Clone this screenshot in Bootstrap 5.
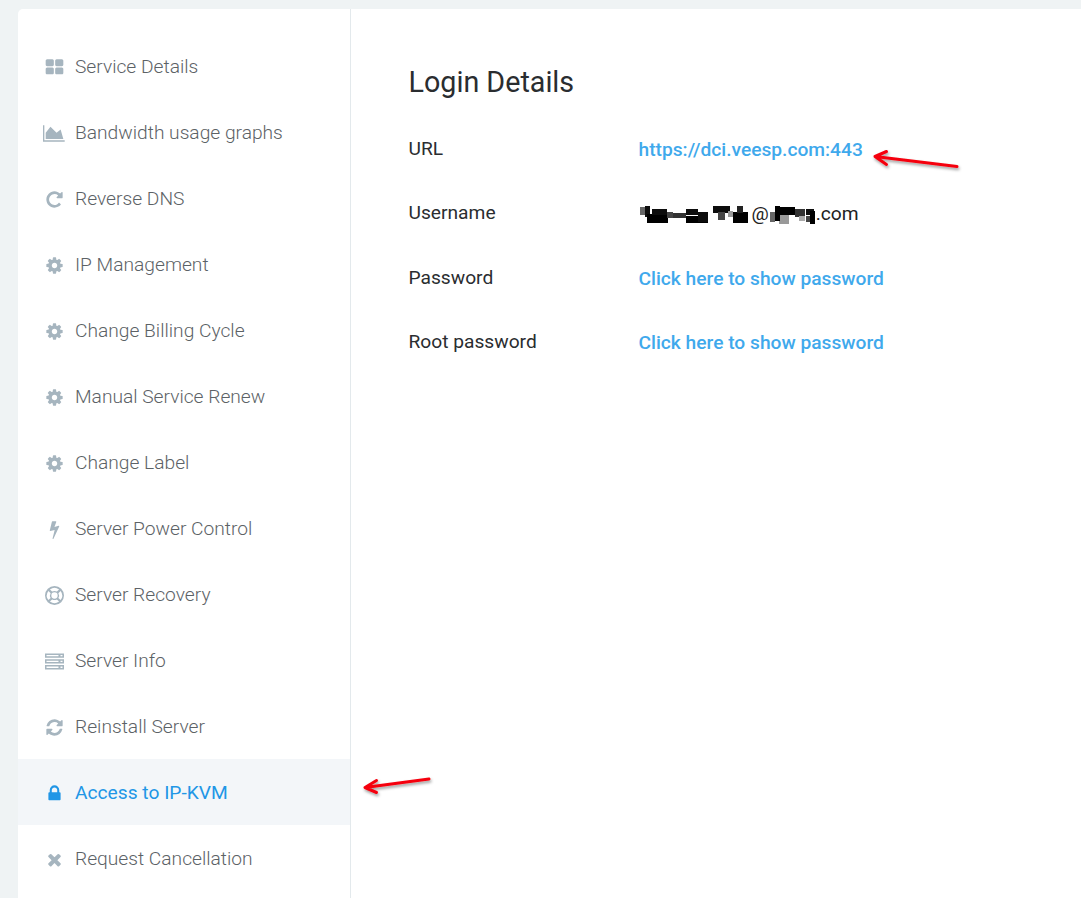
<!doctype html>
<html lang="en">
<head>
<meta charset="utf-8">
<title>Login Details</title>
<link href="https://cdn.jsdelivr.net/npm/bootstrap@5.3.0/dist/css/bootstrap.min.css" rel="stylesheet">
<style>
html, body { height: 100%; }
body { background: #eff3f4; padding: 9px 0 0 18px; overflow: hidden; font-family: Roboto, "Liberation Sans", sans-serif; }
.panel-shell { background: #fff; height: 889px; border-top-left-radius: 5px; position: relative; overflow: hidden; }
.side-menu { width: 333px; padding-top: 24px; border-right: 1px solid #e3e9ec; flex: none; }
.side-link { display: flex; align-items: center; height: 66px; padding: 2px 0 0 25px; color: #5c6266; font-size: 19.2px; font-weight: 300; text-decoration: none; }
.side-link.current { background: #f3f6f9; color: #2196e6; font-weight: 400; }
.side-ico { width: 22px; height: 22px; flex: none; margin-right: 10px; display: flex; align-items: center; justify-content: center; color: #a6b5bf; }
.current .side-ico { color: #2196e6; }
.side-ico svg { height: 19px; width: auto; fill: currentColor; display: block; overflow: visible; }
.detail-pane { padding: 54px 0 0 57.5px; }
.detail-title { font-size: 28.7px; font-weight: 400; color: #2a2d30; line-height: 38px; margin: 0 0 36px; }
.detail-row { display: flex; height: 64.33px; font-size: 19.2px; line-height: 24px; color: #2a2d30; }
.detail-key { width: 230px; flex: none; }
.detail-val { font-weight: 500; position: relative; top: 1px; display: flex; align-items: center; height: 24px; }
.detail-val.plain-val { font-weight: 400; color: #222; }
.detail-val a { color: #3fa9ec; text-decoration: none; }
.smudge { display: block; height: 22px; width: auto; flex: none; overflow: visible; }
.note-arrows { position: absolute; left: -18px; top: -9px; width: 1081px; height: 898px; pointer-events: none; }
.note-arrows g { fill: none; stroke: #f5000f; stroke-width: 3; stroke-linecap: round; stroke-linejoin: round; }
</style>
</head>
<body>
<svg width="0" height="0" class="position-absolute" aria-hidden="true">
  <defs>
    <filter id="soft" x="-10%" y="-30%" width="120%" height="160%"><feGaussianBlur stdDeviation=".6"/></filter>
    <filter id="drop" x="-20%" y="-100%" width="140%" height="300%"><feDropShadow dx="1" dy="2" stdDeviation="1.6" flood-color="#000" flood-opacity=".4"/></filter>
  </defs>
</svg>

<div class="panel-shell d-flex">
  <nav class="side-menu d-flex flex-column">
    <a class="side-link" href="#"><span class="side-ico"><svg viewBox="0 0 1792 1792"><path d="M832 1024v384q0 52-38 90t-90 38h-512q-52 0-90-38t-38-90v-384q0-52 38-90t90-38h512q52 0 90 38t38 90zm0-768v384q0 52-38 90t-90 38h-512q-52 0-90-38t-38-90v-384q0-52 38-90t90-38h512q52 0 90 38t38 90zm896 768v384q0 52-38 90t-90 38h-512q-52 0-90-38t-38-90v-384q0-52 38-90t90-38h512q52 0 90 38t38 90zm0-768v384q0 52-38 90t-90 38h-512q-52 0-90-38t-38-90v-384q0-52 38-90t90-38h512q52 0 90 38t38 90z"/></svg></span>Service Details</a>
    <a class="side-link" href="#"><span class="side-ico"><svg viewBox="0 0 2048 1792"><path d="M2048 1536v128H0V128h128v1408zM1664 512l256 896H256V832l448-576 576 576z"/></svg></span>Bandwidth usage graphs</a>
    <a class="side-link" href="#"><span class="side-ico"><svg viewBox="0 0 1792 1792"><path d="M1664 256v448q0 26-19 45t-45 19h-448q-42 0-59-40-17-39 14-69l138-138q-148-137-349-137-104 0-198.500 40.500t-163.500 109.500-109.500 163.500-40.500 198.500 40.500 198.500 109.500 163.500 163.500 109.500 198.500 40.500q119 0 225-52t179-147q7-10 23-12 15 0 25 9l137 138q9 8 9.500 20.500t-7.500 22.500q-109 132-264 204.500t-327 72.500q-156 0-298-61t-245-164-164-245-61-298 61-298 164-245 245-164 298-61q147 0 284.500 55.500t244.500 156.500l130-129q29-31 70-14 39 17 39 59z"/></svg></span>Reverse DNS</a>
    <a class="side-link" href="#"><span class="side-ico"><svg viewBox="0 0 1792 1792"><path d="M1152 896q0-106-75-181t-181-75-181 75-75 181 75 181 181 75 181-75 75-181zm512-109v222q0 12-8 23t-20 13l-185 28q-19 54-39 91 35 50 107 138 10 12 10 25t-9 23q-27 37-99 108t-94 71q-12 0-26-9l-138-108q-44 23-91 38-16 136-29 186-7 28-36 28h-222q-14 0-24.500-8.500t-11.500-21.500l-28-184q-49-16-90-37l-141 107q-10 9-25 9-14 0-25-11-126-114-165-168-7-10-7-23 0-12 8-23 15-21 51-66.500t54-70.500q-27-50-41-99l-183-27q-13-2-21-12.500t-8-23.500v-222q0-12 8-23t19-13l186-28q14-46 39-92-40-57-107-138-10-12-10-24 0-10 9-23 26-36 98.500-107.500t94.500-71.500q13 0 26 10l138 107q44-23 91-38 16-136 29-186 7-28 36-28h222q14 0 24.500 8.500t11.500 21.500l28 184q49 16 90 37l142-107q9-9 24-9 13 0 25 10 129 119 165 170 7 8 7 22 0 12-8 23-15 21-51 66.500t-54 70.500q26 50 41 98l183 28q13 2 21 12.500t8 23.500z"/></svg></span>IP Management</a>
    <a class="side-link" href="#"><span class="side-ico"><svg viewBox="0 0 1792 1792"><path d="M1152 896q0-106-75-181t-181-75-181 75-75 181 75 181 181 75 181-75 75-181zm512-109v222q0 12-8 23t-20 13l-185 28q-19 54-39 91 35 50 107 138 10 12 10 25t-9 23q-27 37-99 108t-94 71q-12 0-26-9l-138-108q-44 23-91 38-16 136-29 186-7 28-36 28h-222q-14 0-24.500-8.500t-11.500-21.500l-28-184q-49-16-90-37l-141 107q-10 9-25 9-14 0-25-11-126-114-165-168-7-10-7-23 0-12 8-23 15-21 51-66.500t54-70.500q-27-50-41-99l-183-27q-13-2-21-12.500t-8-23.500v-222q0-12 8-23t19-13l186-28q14-46 39-92-40-57-107-138-10-12-10-24 0-10 9-23 26-36 98.500-107.500t94.500-71.500q13 0 26 10l138 107q44-23 91-38 16-136 29-186 7-28 36-28h222q14 0 24.500 8.500t11.500 21.500l28 184q49 16 90 37l142-107q9-9 24-9 13 0 25 10 129 119 165 170 7 8 7 22 0 12-8 23-15 21-51 66.500t-54 70.500q26 50 41 98l183 28q13 2 21 12.500t8 23.500z"/></svg></span>Change Billing Cycle</a>
    <a class="side-link" href="#"><span class="side-ico"><svg viewBox="0 0 1792 1792"><path d="M1152 896q0-106-75-181t-181-75-181 75-75 181 75 181 181 75 181-75 75-181zm512-109v222q0 12-8 23t-20 13l-185 28q-19 54-39 91 35 50 107 138 10 12 10 25t-9 23q-27 37-99 108t-94 71q-12 0-26-9l-138-108q-44 23-91 38-16 136-29 186-7 28-36 28h-222q-14 0-24.500-8.500t-11.500-21.500l-28-184q-49-16-90-37l-141 107q-10 9-25 9-14 0-25-11-126-114-165-168-7-10-7-23 0-12 8-23 15-21 51-66.500t54-70.500q-27-50-41-99l-183-27q-13-2-21-12.500t-8-23.500v-222q0-12 8-23t19-13l186-28q14-46 39-92-40-57-107-138-10-12-10-24 0-10 9-23 26-36 98.500-107.500t94.500-71.500q13 0 26 10l138 107q44-23 91-38 16-136 29-186 7-28 36-28h222q14 0 24.500 8.500t11.500 21.500l28 184q49 16 90 37l142-107q9-9 24-9 13 0 25 10 129 119 165 170 7 8 7 22 0 12-8 23-15 21-51 66.500t-54 70.500q26 50 41 98l183 28q13 2 21 12.500t8 23.500z"/></svg></span>Manual Service Renew</a>
    <a class="side-link" href="#"><span class="side-ico"><svg viewBox="0 0 1792 1792"><path d="M1152 896q0-106-75-181t-181-75-181 75-75 181 75 181 181 75 181-75 75-181zm512-109v222q0 12-8 23t-20 13l-185 28q-19 54-39 91 35 50 107 138 10 12 10 25t-9 23q-27 37-99 108t-94 71q-12 0-26-9l-138-108q-44 23-91 38-16 136-29 186-7 28-36 28h-222q-14 0-24.500-8.500t-11.500-21.500l-28-184q-49-16-90-37l-141 107q-10 9-25 9-14 0-25-11-126-114-165-168-7-10-7-23 0-12 8-23 15-21 51-66.500t54-70.500q-27-50-41-99l-183-27q-13-2-21-12.500t-8-23.500v-222q0-12 8-23t19-13l186-28q14-46 39-92-40-57-107-138-10-12-10-24 0-10 9-23 26-36 98.500-107.500t94.500-71.500q13 0 26 10l138 107q44-23 91-38 16-136 29-186 7-28 36-28h222q14 0 24.500 8.500t11.500 21.500l28 184q49 16 90 37l142-107q9-9 24-9 13 0 25 10 129 119 165 170 7 8 7 22 0 12-8 23-15 21-51 66.500t-54 70.500q26 50 41 98l183 28q13 2 21 12.500t8 23.500z"/></svg></span>Change Label</a>
    <a class="side-link" href="#"><span class="side-ico"><svg viewBox="0 0 1792 1792"><path d="M1333 566q18 20 7 44l-540 1157q-13 25-42 25-4 0-14-2-17-5-25.500-19t-4.500-30l197-808-406 101q-4 1-12 1-18 0-31-11-18-15-13-39l201-825q4-14 16-23t28-9h328q19 0 32 12.500t13 29.500q0 8-5 18l-171 463 396-98q8-2 12-2 19 0 34 15z"/></svg></span>Server Power Control</a>
    <a class="side-link" href="#"><span class="side-ico"><svg viewBox="0 0 24 24"><path fill-rule="evenodd" d="M12 0a12 12 0 1 0 0 24 12 12 0 0 0 0-24zM6.200 4.300A9.700 9.700 0 0 1 17.800 4.300L15 7.100a5.800 5.800 0 0 0-6 0zM4.300 6.200 7.100 9a5.800 5.800 0 0 0 0 6l-2.800 2.800a9.700 9.700 0 0 1 0-11.600zM19.700 6.200a9.700 9.700 0 0 1 0 11.600L16.900 15a5.800 5.800 0 0 0 0-6zM9 16.900a5.800 5.800 0 0 0 6 0l2.800 2.800a9.700 9.700 0 0 1-11.600 0zM12 8a4 4 0 1 0 0 8 4 4 0 0 0 0-8z"/></svg></span>Server Recovery</a>
    <a class="side-link" href="#"><span class="side-ico"><svg viewBox="0 0 19 19"><path fill-rule="evenodd" d="M0 1.500h19v4.300H0zM1.500 3v1.300h12V3zM15.500 3v1.300h2V3zM0 7.300h19v4.300H0zM1.500 8.800v1.300h12V8.800zM15.500 8.800v1.300h2V8.800zM0 13.100h19v4.300H0zM1.500 14.600v1.300h12v-1.300zM15.500 14.600v1.300h2v-1.300z"/></svg></span>Server Info</a>
    <a class="side-link" href="#"><span class="side-ico"><svg viewBox="0 0 1792 1792"><path d="M1639 1056q0 5-1 7-64 268-268 434.500t-478 166.500q-146 0-282.500-55t-243.500-157l-129 129q-19 19-45 19t-45-19-19-45v-448q0-26 19-45t45-19h448q26 0 45 19t19 45-19 45l-137 137q71 66 161 102t187 36q134 0 250-65t186-179q11-17 53-117 8-23 30-23h192q13 0 22.500 9.500t9.500 22.500zm25-800v448q0 26-19 45t-45 19h-448q-26 0-45-19t-19-45 19-45l138-138q-148-137-349-137-134 0-250 65t-186 179q-11 17-53 117-8 23-30 23h-199q-13 0-22.500-9.500t-9.500-22.500v-7q65-268 270-434.500t480-166.500q146 0 284 55.500t245 156.500l130-129q19-19 45-19t45 19 19 45z"/></svg></span>Reinstall Server</a>
    <a class="side-link current" href="#"><span class="side-ico"><svg viewBox="0 0 1792 1792"><path d="M640 768h512v-192q0-106-75-181t-181-75-181 75-75 181v192zm832 96v576q0 40-28 68t-68 28h-960q-40 0-68-28t-28-68v-576q0-40 28-68t68-28h32v-192q0-184 132-316t316-132 316 132 132 316v192h32q40 0 68 28t28 68z"/></svg></span>Access to IP-KVM</a>
    <a class="side-link" href="#"><span class="side-ico"><svg viewBox="0 0 1792 1792"><path d="M1490 1322q0 40-28 68l-136 136q-28 28-68 28t-68-28l-294-294-294 294q-28 28-68 28t-68-28l-136-136q-28-28-28-68t28-68l294-294-294-294q-28-28-28-68t28-68l136-136q28-28 68-28t68 28l294 294 294-294q28-28 68-28t68 28l136 136q28 28 28 68t-28 68l-294 294 294 294q28 28 28 68z"/></svg></span>Request Cancellation</a>
  </nav>

  <main class="detail-pane flex-grow-1">
    <h1 class="detail-title">Login Details</h1>
    <div class="detail-row"><div class="detail-key">URL</div><div class="detail-val"><a href="#">https://dci.veesp.com:443</a></div></div>
    <div class="detail-row"><div class="detail-key">Username</div><div class="detail-val plain-val">
      <svg class="smudge" viewBox="0 0 113 22" aria-hidden="true"><g filter="url(#soft)"><rect x="1" y="4" width="5" height="8" fill="#666"/><rect x="6" y="3" width="5" height="11" fill="#111"/><rect x="8" y="11" width="21" height="9" fill="#000"/><rect x="13" y="6" width="15" height="6" fill="#111"/><rect x="28" y="9" width="6" height="6" fill="#444"/><rect x="34" y="10" width="13" height="5" fill="#333"/><rect x="47" y="6" width="12" height="6" fill="#111"/><rect x="47" y="13" width="22" height="7" fill="#000"/><rect x="59" y="9" width="10" height="10" fill="#111"/><rect x="74" y="3" width="17" height="7" fill="#111"/><rect x="79" y="9" width="7" height="8" fill="#444"/><rect x="89" y="8" width="5" height="6" fill="#999"/><rect x="94" y="9" width="15" height="11" fill="#000"/><rect x="98" y="3" width="6" height="7" fill="#222"/></g></svg>@<svg class="smudge" viewBox="0 0 47 22" aria-hidden="true"><g filter="url(#soft)"><rect x="10" y="11" width="10" height="10" fill="#999"/><rect x="1" y="9" width="5" height="10" fill="#666"/><rect x="6" y="3" width="5" height="15" fill="#000"/><rect x="10" y="4" width="16" height="8" fill="#000"/><rect x="26" y="6" width="10" height="8" fill="#333"/><rect x="30" y="13" width="6" height="5" fill="#aaa"/><rect x="37" y="6" width="8" height="6" fill="#111"/><rect x="37" y="13" width="4" height="6" fill="#444"/><rect x="41" y="8" width="5" height="13" fill="#000"/></g></svg>.com</div></div>
    <div class="detail-row"><div class="detail-key">Password</div><div class="detail-val"><a href="#">Click here to show password</a></div></div>
    <div class="detail-row"><div class="detail-key">Root password</div><div class="detail-val"><a href="#">Click here to show password</a></div></div>
  </main>

  <svg class="note-arrows" viewBox="0 0 1081 898" aria-hidden="true">
    <g filter="url(#drop)">
      <path d="M957 166.500 L875 156.500 M886.500 151.500 L875 156.500 L886.500 164.500"/>
      <path d="M429 779 L365 787.500 M376.500 780.500 L365 787.500 L376.500 792.500"/>
    </g>
  </svg>
</div>
<script src="https://cdn.jsdelivr.net/npm/bootstrap@5.3.0/dist/js/bootstrap.bundle.min.js"></script>
</body>
</html>
